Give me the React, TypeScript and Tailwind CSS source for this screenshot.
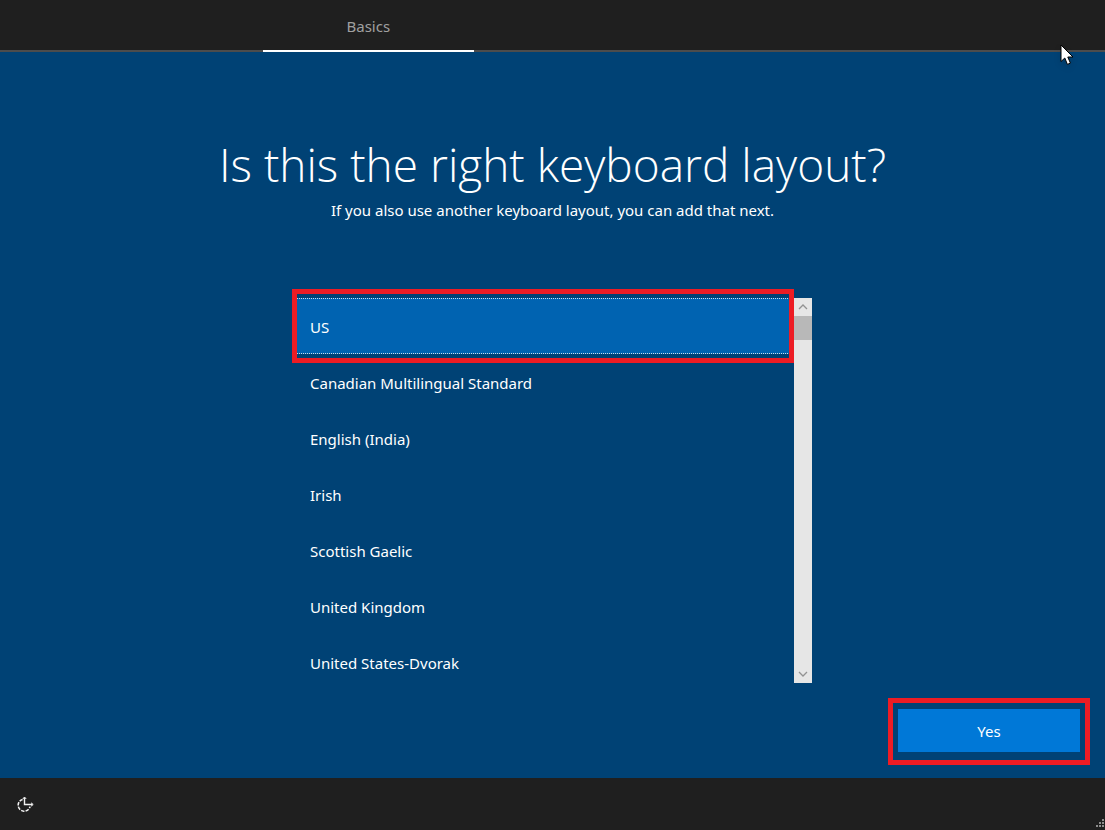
import React, { useState } from 'react';
import clsx from 'clsx';

const LAYOUTS = [
  'US',
  'Canadian Multilingual Standard',
  'English (India)',
  'Irish',
  'Scottish Gaelic',
  'United Kingdom',
  'United States-Dvorak',
];

const Highlight = ({ className }: { className: string }) => (
  <div className={clsx('absolute border-[5px] border-[#ed1c24] pointer-events-none', className)} />
);

const ScrollArrow = ({ label, d }: { label: string; d: string }) => (
  <button type="button" aria-label={label} className="h-[18px] w-full flex items-center justify-center shrink-0">
    <svg width="10" height="6" viewBox="0 0 10 6" fill="none" stroke="#929292" strokeWidth="1.3">
      <path d={d} />
    </svg>
  </button>
);

const EaseOfAccessIcon = () => (
  <svg width="20" height="18" viewBox="0 0 20 18" fill="none" stroke="#f2f2f2">
    <path d="M7.6 3.4A6 6 0 1 0 15 10.6" strokeWidth="1.6" strokeDasharray="3.4 1.2" />
    <path d="M9.5 1.5V8.5H17.5" strokeWidth="1.4" />
    <path d="M7.8 3L9.5 1L11.2 3M16 6.8L18.2 8.5L16 10.2" strokeWidth="1" />
  </svg>
);

const Pointer = () => (
  <svg className="absolute right-[30px] top-[44px] drop-shadow-md" width="15" height="22" viewBox="0 0 15 22">
    <path d="M1 1V17.5L4.8 14L7.4 20.4L10.4 19.1L7.8 13H13Z" fill="#fff" stroke="#000" strokeWidth="1" />
  </svg>
);

const Grip = () => (
  <svg className="absolute right-0 bottom-[2px]" width="9" height="9" viewBox="0 0 9 9" fill="#8c8c8c">
    <path d="M6 0h2v2H6zM3 3h2v2H3zM6 3h2v2H6zM0 6h2v2H0zM3 6h2v2H3zM6 6h2v2H6z" />
  </svg>
);

export default function App() {
  const [selected, setSelected] = useState('US');

  return (
    <div className="relative min-h-screen flex flex-col bg-[#004275] text-white text-[15px] leading-5 font-['Noto_Sans','Open_Sans',sans-serif]">
      <header className="h-[52px] shrink-0 bg-[#1f1f1f] border-b-2 border-[#4c4c4c]">
        <nav className="h-[52px] w-2/3 flex justify-center">
          <button type="button" className="w-[211px] h-full pt-0.5 border-b-2 border-white text-[#a0a0a0]">
            Basics
          </button>
        </nav>
      </header>

      <main className="flex-1 flex flex-col items-center">
        <h1 className="mt-20 text-[46px] leading-[64px] font-light text-center font-['Open_Sans','Noto_Sans',sans-serif]">
          Is this the right keyboard layout?
        </h1>
        <p className="mt-1 text-center">If you also use another keyboard layout, you can add that next.</p>

        <div className="relative mt-[78px] h-[385px] w-[519px] max-w-full flex">
          <ul role="listbox" aria-label="Keyboard layout" className="flex-1 overflow-hidden">
            {LAYOUTS.map((name) => (
              <li key={name}>
                <button
                  type="button"
                  role="option"
                  aria-selected={selected === name}
                  onClick={() => setSelected(name)}
                  className={clsx(
                    'w-full h-14 pt-0.5 px-[17px] text-left border-y',
                    selected === name ? 'bg-[#0063b1] border-dotted border-[#c9dcea]' : 'border-transparent'
                  )}
                >
                  {name}
                </button>
              </li>
            ))}
          </ul>
          <div className="w-[18px] bg-[#e6e6e6] flex flex-col">
            <ScrollArrow label="Scroll up" d="M1 5L5 1L9 5" />
            <div className="h-6 bg-[#b8b8b8]" />
            <div className="flex-1" />
            <ScrollArrow label="Scroll down" d="M1 1L5 5L9 1" />
          </div>
          <Highlight className="-left-px -top-[9px] w-[502px] h-[74px]" />
        </div>

        <div className="relative mt-auto mb-[26px] mr-[25px] self-end">
          <button type="button" className="block w-[182px] h-[43px] bg-[#0078d7]">
            Yes
          </button>
          <Highlight className="-inset-x-[10px] -top-[11px] -bottom-[13px]" />
        </div>
      </main>

      <footer className="relative h-[52px] shrink-0 bg-[#1f1f1f] px-[15px] pt-0.5 flex items-center">
        <button type="button" aria-label="Ease of access">
          <EaseOfAccessIcon />
        </button>
        <Grip />
      </footer>

      <Pointer />
    </div>
  );
}
